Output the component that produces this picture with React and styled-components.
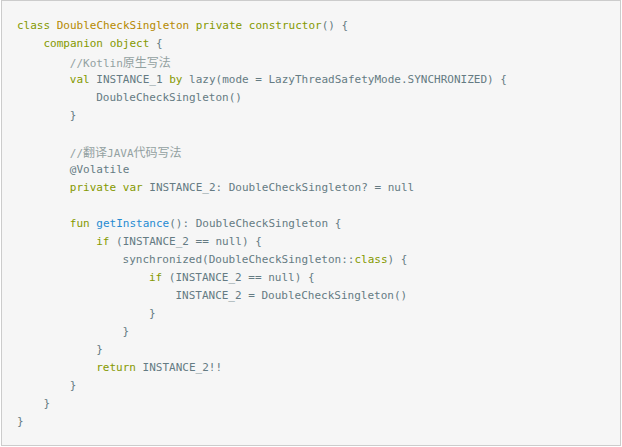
import React from 'react';
import styled, { createGlobalStyle } from 'styled-components';

const Global = createGlobalStyle`
    html, body {
        margin: 0;
        padding: 0;
        background: #ffffff;
    }
`;

// 코드 박스
const CodeBox = styled.pre`
    box-sizing: border-box;
    width: 620px;
    height: 446px;
    margin: 0 0 0 1px;
    padding: 16px 15px 15px 15px;
    background: #f6f6f6;
    border: 1px solid #cccccc;
    border-left-width: 1px;
    font-family: "DejaVu Sans Mono", "Liberation Mono", "Noto Sans CJK SC", monospace;
    font-size: 11px;
    line-height: 18px;
    color: #657b83;
    white-space: pre;
    overflow: hidden;
`;

const Line = styled.div`
    height: 18px;
    padding-left: ${p => p.$indent * 26.4}px;
`;

const colors = {
    kw: '#859900',
    type: '#b58900',
    fn: '#268bd2',
    cm: '#93a1a1',
    txt: '#657b83',
};

const Tok = styled.span`
    color: ${p => colors[p.$k] || colors.txt};
`;

const Cjk = styled.span`
    font-family: "Noto Sans CJK SC", sans-serif;
    font-size: 12px;
`;

const K = ({children}) => <Tok $k="kw">{children}</Tok>;

const lines = [
    [0, <><K>class</K> <Tok $k="type">DoubleCheckSingleton</Tok> <K>private</K> <K>constructor</K>() {'{'}</>],
    [1, <><K>companion</K> <K>object</K> {'{'}</>],
    [2, <Tok $k="cm">//Kotlin<Cjk>原生写法</Cjk></Tok>],
    [2, <><K>val</K> INSTANCE_1 <K>by</K> lazy(mode = LazyThreadSafetyMode.SYNCHRONIZED) {'{'}</>],
    [3, <>DoubleCheckSingleton()</>],
    [2, <>{'}'}</>],
    [0, null],
    [2, <Tok $k="cm">//<Cjk>翻译</Cjk>JAVA<Cjk>代码写法</Cjk></Tok>],
    [2, <>@Volatile</>],
    [2, <><K>private</K> <K>var</K> INSTANCE_2: DoubleCheckSingleton? = null</>],
    [0, null],
    [2, <><K>fun</K> <Tok $k="fn">getInstance</Tok>(): DoubleCheckSingleton {'{'}</>],
    [3, <><K>if</K> (INSTANCE_2 == null) {'{'}</>],
    [4, <>synchronized(DoubleCheckSingleton::<K>class</K>) {'{'}</>],
    [5, <><K>if</K> (INSTANCE_2 == null) {'{'}</>],
    [6, <>INSTANCE_2 = DoubleCheckSingleton()</>],
    [5, <>{'}'}</>],
    [4, <>{'}'}</>],
    [3, <>{'}'}</>],
    [3, <><K>return</K> INSTANCE_2!!</>],
    [2, <>{'}'}</>],
    [1, <>{'}'}</>],
    [0, <>{'}'}</>],
];

const App = () => (
    <>
        <Global />
        <CodeBox>
            {lines.map(([indent, content], i) => (
                <Line key={i} $indent={indent}>{content}</Line>
            ))}
        </CodeBox>
    </>
);

export default App;
